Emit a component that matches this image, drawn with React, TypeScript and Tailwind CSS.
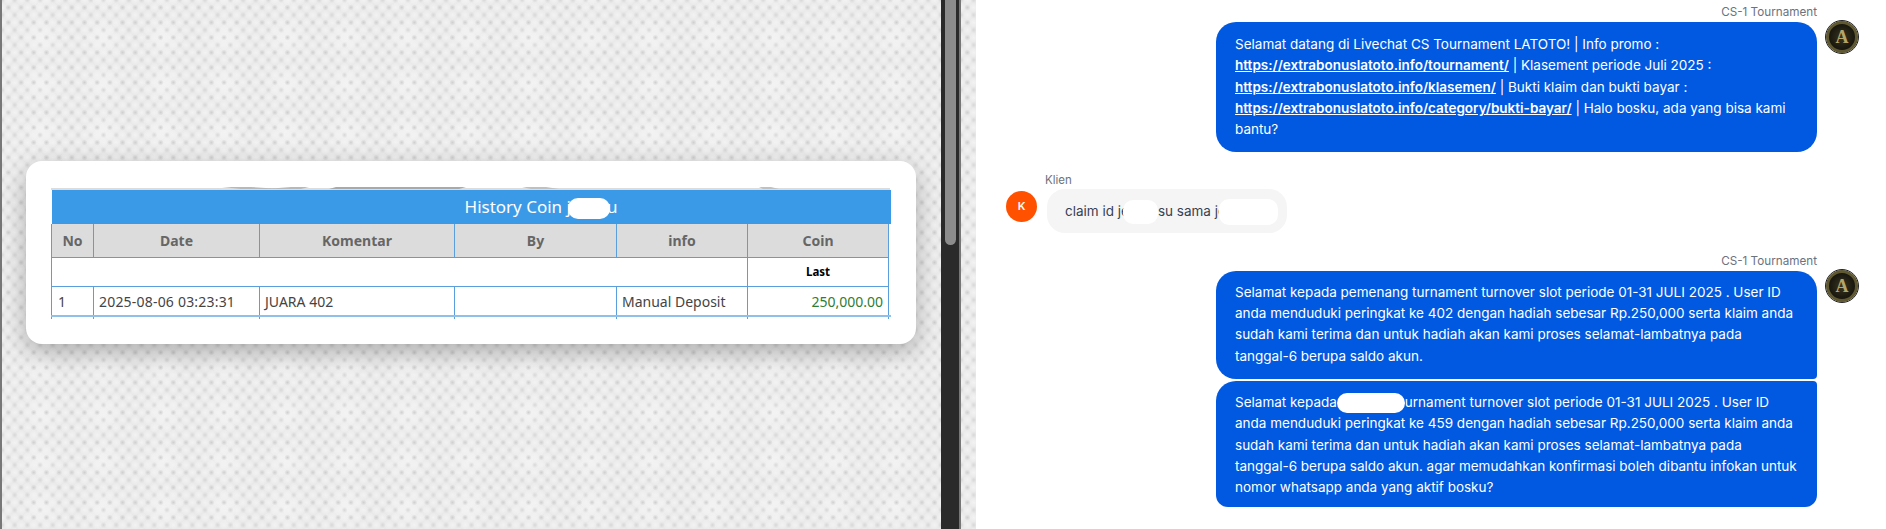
const cellBorder = 'border border-[#5a9fdc]';
const lastRow = 'border-b-2 border-b-[#8fc0ea]';

function Redact({ className }: { className: string }) {
  return <span className={`inline-block align-middle bg-white -my-2 ${className}`} />;
}

function HistoryTable() {
  const heads = ['No', 'Date', 'Komentar', 'By', 'info', 'Coin'];
  return (
    <div className="h-[133px] overflow-hidden font-['Noto_Sans',sans-serif]">
      {/* what shows of the banner that scrolled away above the title */}
      <svg width="839" height="4" className="block">
        <rect x="0" y="2" width="839" height="2" fill="#dcdcdc" />
        <polygon points="171,1 200,1 230,3 190,3" fill="#b8b8b8" />
        <polygon points="215,3 240,1 258,1 250,3" fill="#b8b8b8" />
        <polygon points="278,3 285,1 415,1 408,3" fill="#a9a9a9" />
        <polygon points="471,1 495,1 508,3 480,3" fill="#c0c0c0" />
        <polygon points="708,1 720,1 728,3 712,3" fill="#c0c0c0" />
      </svg>
      <table className="w-[839px] table-fixed border-collapse">
        <colgroup>
          <col className="w-[42px]" />
          <col className="w-[166px]" />
          <col className="w-[195px]" />
          <col className="w-[162px]" />
          <col className="w-[131px]" />
          <col className="w-[141px]" />
          <col className="w-[2px]" />
        </colgroup>
        <thead>
          <tr className="h-[34px] bg-[#3b9ae8]">
            <th colSpan={7} className="p-0 pl-[140px] text-center text-[17px] font-normal text-white">
              History Coin j<Redact className="mx-[-3px] h-[21px] w-[42px] rounded-[10px]" />u
            </th>
          </tr>
          <tr className="h-[33px] bg-[#dcdcdc] text-[14px] font-bold text-[#666666]">
            {heads.map((head) => (
              <th key={head} className={`${cellBorder} border-t-0 p-0 text-center`}>
                {head}
              </th>
            ))}
            <th className="border-l border-[#5a9fdc]/50 bg-white p-0" />
          </tr>
        </thead>
        <tbody>
          <tr className="h-[29px] bg-white">
            <td colSpan={5} className={`${cellBorder} p-0`} />
            <td className={`${cellBorder} p-0 text-center text-[11.5px] font-bold text-black`}>Last</td>
            <td className="border-l border-[#5a9fdc]/50 p-0" />
          </tr>
          <tr className="h-[30px] bg-white text-[14px] text-[#444444]">
            <td className={`${cellBorder} ${lastRow} px-[6px] pt-[1px] pb-0`}>1</td>
            <td className={`${cellBorder} ${lastRow} px-[5px] pt-[1px] pb-0 tracking-[0.2px]`}>2025-08-06 03:23:31</td>
            <td className={`${cellBorder} ${lastRow} px-[5px] pt-[1px] pb-0`}>JUARA 402</td>
            <td className={`${cellBorder} ${lastRow} px-[5px] pt-[1px] pb-0`} />
            <td className={`${cellBorder} ${lastRow} px-[5px] pt-[1px] pb-0`}>Manual Deposit</td>
            <td className={`${cellBorder} ${lastRow} px-[5px] pt-[1px] pb-0 text-right text-[#2e7d32]`}>250,000.00</td>
            <td className="border-l border-b-2 border-[#8fc0ea] p-0" />
          </tr>
          <tr className="h-[10px] bg-white">
            <td className={`${cellBorder} p-0`} />
            <td className={`${cellBorder} p-0`} />
            <td className={`${cellBorder} p-0`} />
            <td className={`${cellBorder} p-0`} />
            <td className={`${cellBorder} p-0`} />
            <td className={`${cellBorder} p-0`} />
            <td className="border-l border-[#8fc0ea] p-0" />
          </tr>
        </tbody>
      </table>
    </div>
  );
}

function Wallpaper({ className, children }: { className: string; children?: React.ReactNode }) {
  return (
    <div
      className={`bg-[#e9e9e9] [background-image:radial-gradient(circle,#cfcfcf_0,transparent_3px),radial-gradient(circle,#d6d6d6_0,transparent_3px),radial-gradient(circle,#f3f3f3_0,transparent_5px),radial-gradient(circle,#f3f3f3_0,transparent_5px),radial-gradient(circle,#f2f2f2_0,transparent_22px)] [background-position:0_0,6.35px_7.5px,6.35px_0,0_7.5px,9px_14px] [background-size:12.7px_15px,12.7px_15px,12.7px_15px,12.7px_15px,61px_47px] ${className}`}
    >
      {children}
    </div>
  );
}

function AgentAvatar() {
  return (
    <div className="mt-[-1px] flex size-[32px] items-center justify-center rounded-full border-[3px] border-[#5f5830] bg-[radial-gradient(circle,#3a3520_0,#15140d_75%)] font-['Liberation_Serif',serif] text-[18px] font-bold leading-none text-[#b5a468] outline outline-1 outline-[#222222]">
      A
    </div>
  );
}

function AgentBubble({ className, children }: { className: string; children: React.ReactNode }) {
  return (
    <div className={`w-[601px] bg-[#0059e0] pl-[19px] pr-[18px] text-[13.5px] leading-[21.33px] text-white ${className}`}>
      {children}
    </div>
  );
}

function AgentName({ className }: { className: string }) {
  return <div className={`w-[601px] text-right text-[11.7px] leading-[16px] text-[#6b7280] ${className}`}>CS-1 Tournament</div>;
}

function BotLink({ children }: { children: string }) {
  return <span className="font-semibold underline">{children}</span>;
}

function Chat() {
  return (
    <div className="h-[529px] flex-1 overflow-hidden bg-white pt-[4px] font-['Inter',sans-serif]">
      <div className="flex flex-col items-end pr-[28px]">
        <div className="mr-[41px]">
          <AgentName className="mb-[2px]" />
        </div>
        <div className="flex gap-[9px]">
          <AgentBubble className="rounded-[20px] pt-[12px] pb-[11px]">
            Selamat datang di Livechat CS Tournament LATOTO! | Info promo :{' '}
            <BotLink>https://extrabonuslatoto.info/tournament/</BotLink> | Klasement periode Juli 2025 :{' '}
            <BotLink>https://extrabonuslatoto.info/klasemen/</BotLink> | Bukti klaim dan bukti bayar :{' '}
            <BotLink>https://extrabonuslatoto.info/category/bukti-bayar/</BotLink> | Halo bosku, ada yang bisa kami
            bantu?
          </AgentBubble>
          <AgentAvatar />
        </div>
      </div>

      <div className="mt-[20px] flex gap-[10px] pl-[30px]">
        <div className="mt-[19px] flex size-[31px] items-center justify-center rounded-full bg-[#ff5100] text-[11px] font-semibold text-white">
          K
        </div>
        <div>
          <div className="mb-[1px] ml-[-2px] text-[11.5px] leading-[16px] text-[#6b7280]">Klien</div>
          <div className="flex h-[44px] w-[240px] items-center rounded-[18px] bg-[#f5f5f5] pl-[18px] text-[13.5px] text-[#374151]">
            <span className="whitespace-nowrap">
              claim id je
              <Redact className="ml-[-6px] h-[24px] w-[35px] rounded-[10px]" />
              su sama je
              <Redact className="ml-[-7px] h-[26px] w-[59px] rounded-[10px]" />
            </span>
          </div>
        </div>
      </div>

      <div className="mt-[20px] flex flex-col items-end pr-[28px]">
        <div className="mr-[41px]">
          <AgentName className="mb-[2px]" />
        </div>
        <div className="flex gap-[9px]">
          <div className="flex flex-col gap-[2px]">
            <AgentBubble className="rounded-t-[20px] rounded-bl-[20px] rounded-br-[4px] pt-[11px] pb-[12px]">
              Selamat kepada pemenang turnament turnover slot periode 01-31 JULI 2025 . User ID anda menduduki peringkat ke
              402 dengan hadiah sebesar Rp.250,000 serta klaim anda sudah kami terima dan untuk hadiah akan kami proses
              selamat-lambatnya pada tanggal-6 berupa saldo akun.
            </AgentBubble>
            <AgentBubble className="h-[126px] rounded-tl-[20px] rounded-tr-[4px] rounded-b-[12px] pt-[11px]">
              Selamat kepada
              <Redact className="h-[20px] w-[68px] rounded-[10px]" />
              urnament turnover slot periode 01-31 JULI 2025 . User ID anda menduduki peringkat ke 459 dengan hadiah
              sebesar Rp.250,000 serta klaim anda sudah kami terima dan untuk hadiah akan kami proses selamat-lambatnya
              pada tanggal-6 berupa saldo akun. agar memudahkan konfirmasi boleh dibantu infokan untuk nomor whatsapp anda
              yang aktif bosku?
            </AgentBubble>
          </div>
          <AgentAvatar />
        </div>
      </div>
    </div>
  );
}

export default function App() {
  return (
    <div className="flex h-[529px] w-[1886px] overflow-hidden bg-white">
      <Wallpaper className="h-[529px] w-[941px] border-l-2 border-[#777777] pl-[24px] pt-[161px]">
        <div className="h-[183px] w-[890px] rounded-[16px] bg-white pl-[25px] pt-[25px] shadow-[0_8px_24px_rgba(0,0,0,0.28)]">
          <HistoryTable />
        </div>
      </Wallpaper>
      <div className="h-[529px] w-[18px] bg-[#2a2a2a] pl-[4px]">
        <div className="h-[245px] w-[11px] rounded-b-[6px] bg-[#8c8c8c]" />
      </div>
      <Wallpaper className="h-[529px] w-[17px] border-l-2 border-[#777777]" />
      <Chat />
    </div>
  );
}
